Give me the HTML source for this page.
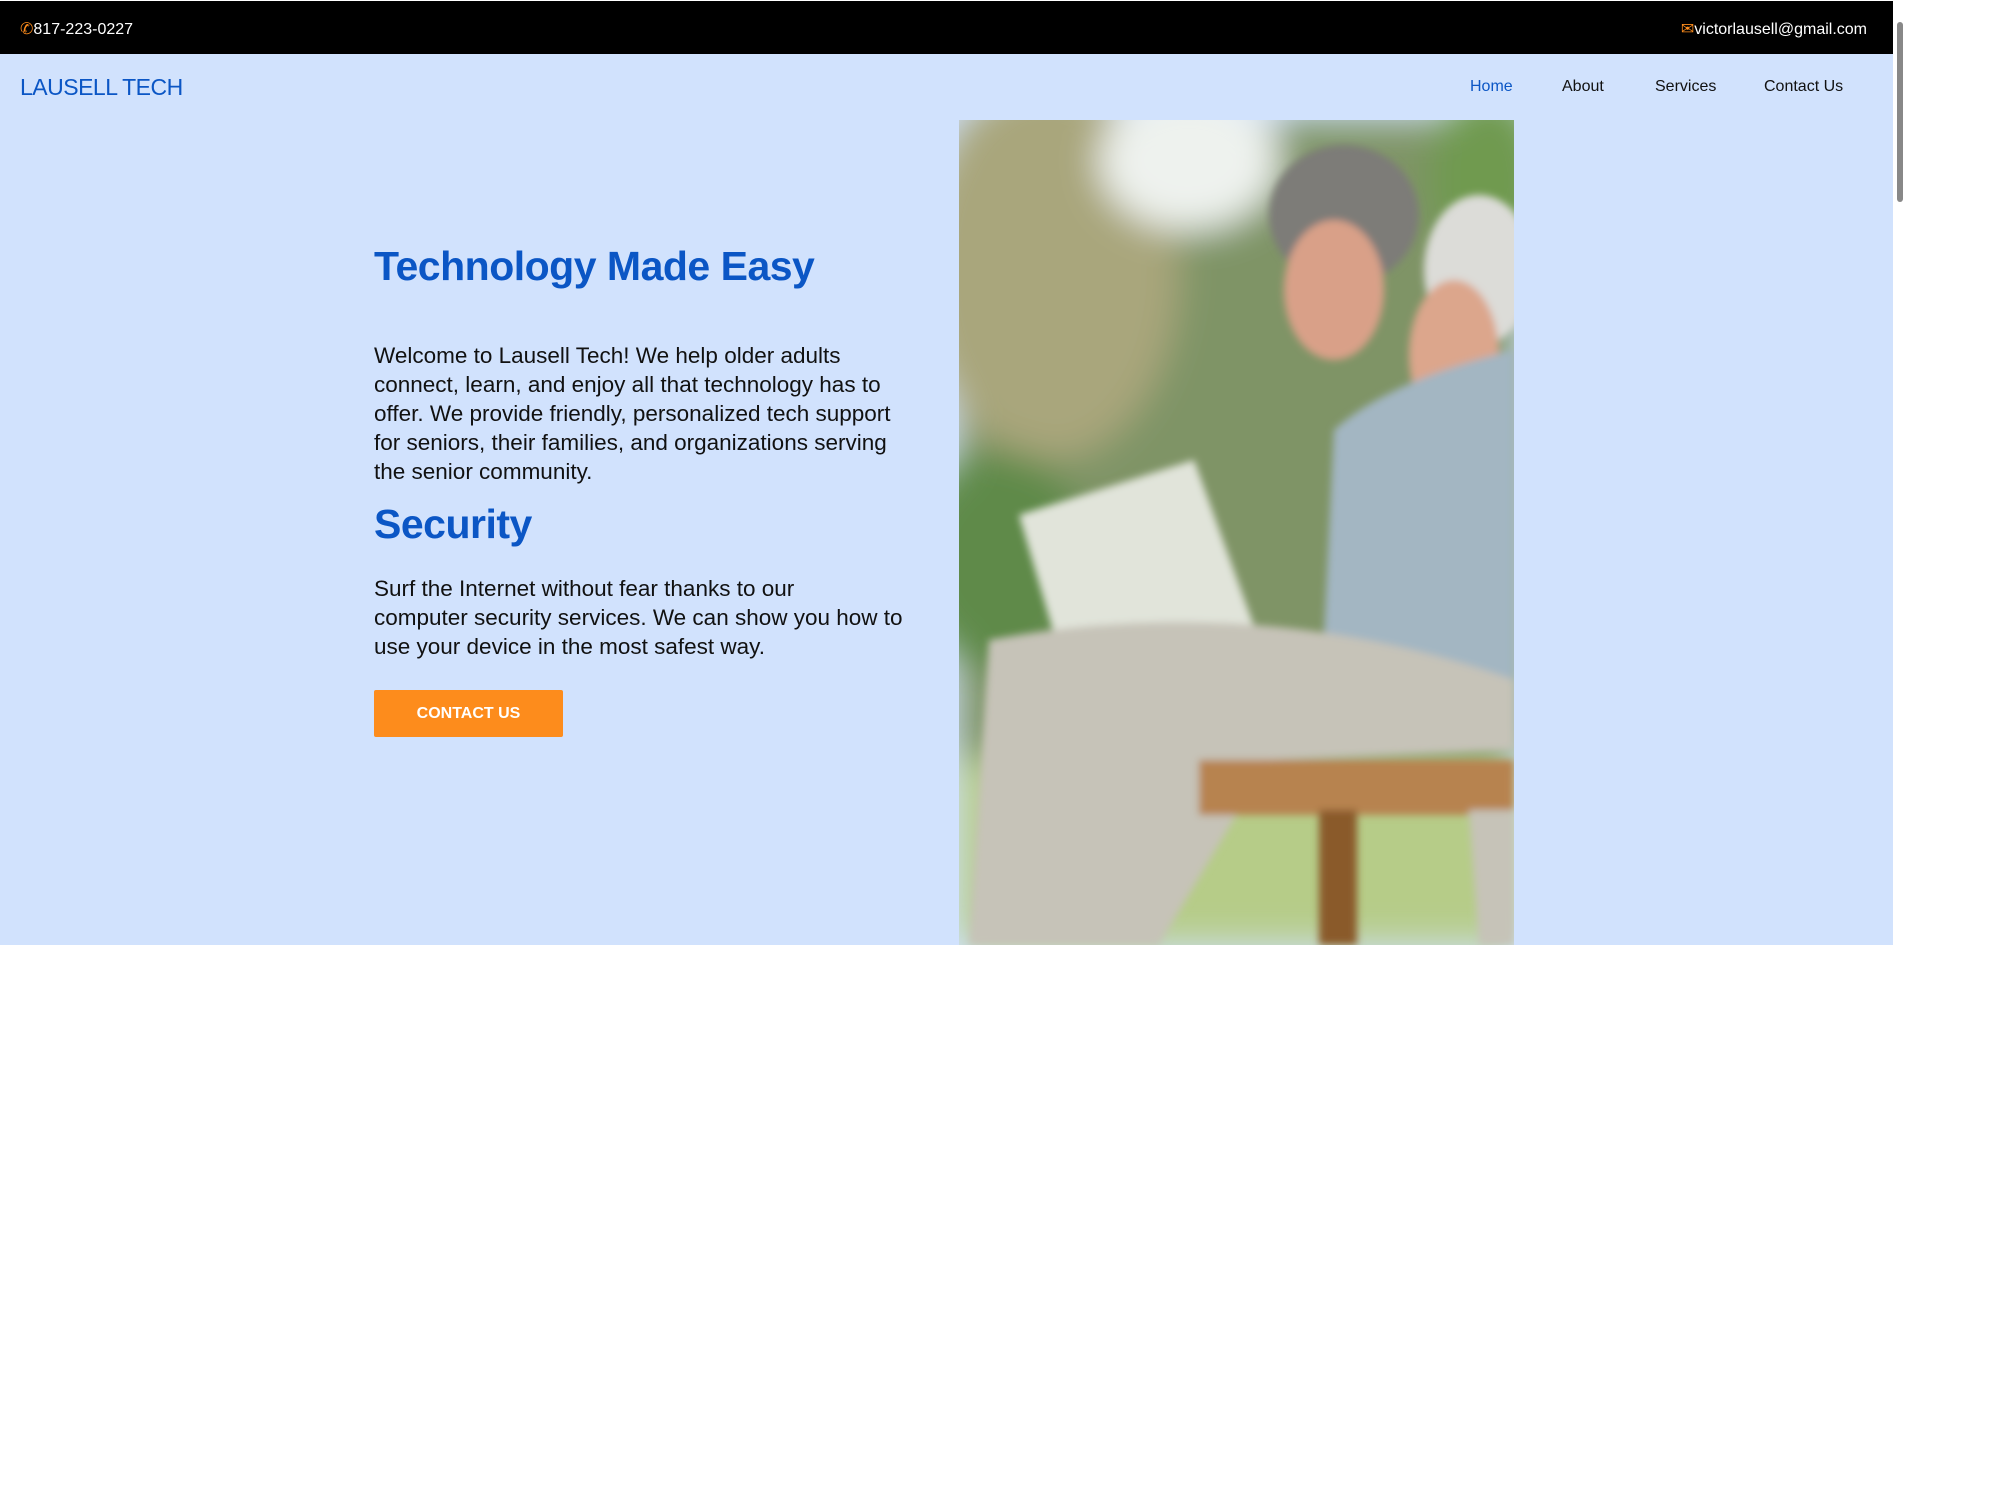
<!DOCTYPE html>
<html><head><meta charset="utf-8"><style>
*{margin:0;padding:0;box-sizing:border-box}
body{width:2016px;height:1512px;background:#fff;font-family:"Liberation Sans",sans-serif;position:relative;overflow:hidden}
.top{position:absolute;left:0;top:1px;width:1893px;height:53px;background:#000;color:#fff;font-size:16px}
.top .ph{position:absolute;left:20px;top:18px}
.top .em{position:absolute;right:26px;top:18px}
.hero{position:absolute;left:0;top:54px;width:1893px;height:891px;background:#d1e2fd}
.logo{position:absolute;left:20px;top:74px;font-size:23px;color:#0b56c5;letter-spacing:-0.5px}
.nav{position:absolute;top:78px;font-size:16px;color:#111}
h1{position:absolute;left:374px;font-size:41px;color:#0b56c5;font-weight:bold;letter-spacing:-0.5px}
p{position:absolute;left:374px;font-size:22.5px;line-height:29px;color:#111;letter-spacing:0}
.btn{position:absolute;left:374px;top:690px;width:189px;height:47px;background:#fd8c1c;color:#fff;font-size:16px;font-weight:bold;text-align:center;line-height:47px;border-radius:2px}
.img{position:absolute;left:959px;top:120px;width:555px;height:825px;overflow:hidden}
.sb{position:absolute;left:1894px;top:0;width:12px;height:1512px;background:#fff}
.sb div{position:absolute;left:3px;top:22px;width:6px;height:180px;background:#888;border-radius:3px}
</style></head><body>
<div class="top"><span class="ph"><span style="color:#fd8c1c">&#9990;</span>817-223-0227</span><span class="em"><span style="color:#fd8c1c">&#9993;</span>victorlausell@gmail.com</span></div>
<div class="hero"></div>
<div class="logo">LAUSELL TECH</div>
<div class="nav" style="left:1470px;color:#0b56c5">Home</div>
<div class="nav" style="left:1562px">About</div>
<div class="nav" style="left:1655px">Services</div>
<div class="nav" style="left:1764px">Contact Us</div>
<h1 style="top:243px">Technology Made Easy</h1>
<p style="top:341px">Welcome to Lausell Tech! We help older adults<br>connect, learn, and enjoy all that technology has to<br>offer. We provide friendly, personalized tech support<br>for seniors, their families, and organizations serving<br>the senior community.</p>
<h1 style="top:501px">Security</h1>
<p style="top:574px">Surf the Internet without fear thanks to our<br>computer security services. We can show you how to<br>use your device in the most safest way.</p>
<div class="btn">CONTACT US</div>
<div class="img"><svg width="555" height="825" viewBox="0 0 555 825">
<defs><filter id="b"><feGaussianBlur stdDeviation="18"/></filter><filter id="s"><feGaussianBlur stdDeviation="4"/></filter></defs>
<g filter="url(#b)">
<rect x="0" y="0" width="555" height="825" fill="#7f9466"/>
<ellipse cx="90" cy="150" rx="130" ry="190" fill="#a9a67c"/>
<ellipse cx="230" cy="40" rx="90" ry="70" fill="#eef2ee"/>
<ellipse cx="530" cy="60" rx="60" ry="90" fill="#6f9a50"/>
<ellipse cx="40" cy="440" rx="90" ry="110" fill="#5f8a4a"/>
<rect x="0" y="640" width="555" height="185" fill="#b6cc88"/>
</g>
<g filter="url(#s)">
<ellipse cx="385" cy="95" rx="75" ry="70" fill="#7d7b78"/>
<ellipse cx="375" cy="170" rx="50" ry="70" fill="#d9a088"/>
<ellipse cx="520" cy="150" rx="55" ry="75" fill="#dcdcd8"/>
<ellipse cx="495" cy="235" rx="45" ry="75" fill="#dca68c"/>
<path d="M375 310 Q430 260 555 230 L555 620 L360 620 Z" fill="#a3b6c2"/>
<path d="M60 395 L235 340 L300 520 L110 565 Z" fill="#e1e4da"/>
<path d="M30 520 Q300 470 555 560 L555 630 L310 640 L200 825 L10 825 Z" fill="#c6c3b8"/>
<rect x="240" y="640" width="315" height="55" fill="#b7834f"/>
<rect x="360" y="690" width="38" height="135" fill="#8a5a2c"/>
<path d="M510 690 L555 690 L555 825 L520 825 Z" fill="#c6c3b8"/>
</g>
</svg></div>
<div class="sb"><div></div></div>
</body></html>
